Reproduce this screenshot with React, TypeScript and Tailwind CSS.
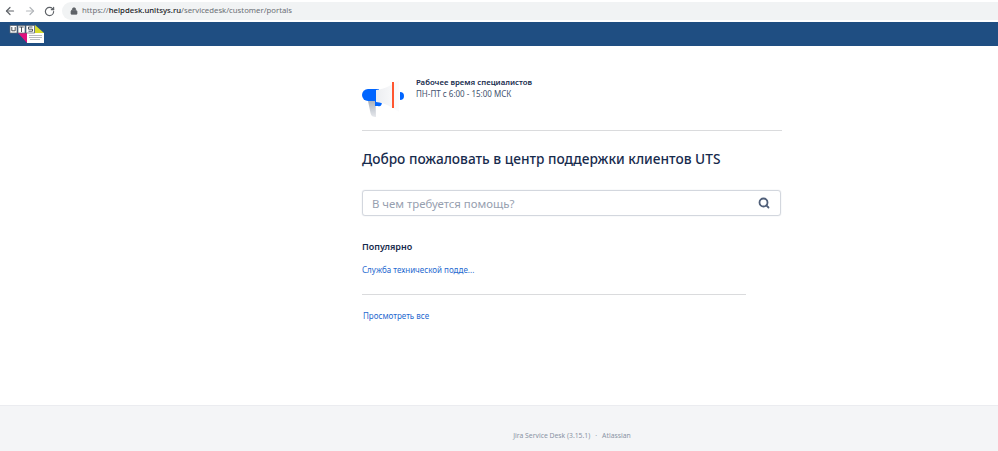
import { ArrowLeft, ArrowRight, RotateCw, Lock, Search } from "lucide-react";

function UtsLogo() {
  return (
    <svg width="36" height="24" viewBox="0 0 36 24" className="block">
      <polygon points="9,11 18,11 18,21" fill="#e0107e" />
      <polygon points="18,11 35,11 35,21 18,21" fill="#ffffff" />
      <polygon points="26,3 35,11 26,11" fill="#d8dc2c" />
      <rect x="1" y="3.500" width="7" height="7.500" fill="#fff" stroke="#5a6470" strokeWidth="0.7" />
      <rect x="9" y="3.500" width="7" height="7.500" fill="#fff" stroke="#5a6470" strokeWidth="0.7" />
      <rect x="17" y="3.500" width="8.500" height="7.500" fill="#fff" stroke="#5a6470" strokeWidth="0.7" />
      <path d="M2.800 5v3.800h3.400V5M10.300 5h4.400M12.500 5v5M23.500 5h-4v2.200h4v2h-4" fill="none" stroke="#3a3f46" strokeWidth="0.9" />
      <path d="M20 13.500h13M20 15.500h13M21 17.500h10" stroke="#a5a8ad" strokeWidth="0.8" />
    </svg>
  );
}

function Megaphone() {
  return (
    <svg width="44" height="44" viewBox="0 0 44 44" className="block">
      <defs>
        <linearGradient id="cone" x1="0" y1="0" x2="1" y2="0">
          <stop offset="0" stopColor="#eceef1" />
          <stop offset="1" stopColor="#fcfcfd" />
        </linearGradient>
        <linearGradient id="handle" x1="0" y1="0" x2="0" y2="1">
          <stop offset="0" stopColor="#aab2bd" />
          <stop offset="1" stopColor="#e6e8ec" />
        </linearGradient>
      </defs>
      <path d="M38 16a4 4 0 0 1 0 8z" fill="#0065ff" />
      <path d="M6 13h11v12H6a6 6 0 0 1 0-12z" fill="#0065ff" />
      <path d="M6 25h7.500L14 41c-3 0-5-1-5.500-4z" fill="url(#handle)" />
      <path d="M13 25h6a3 3 0 0 1-3 5h-3z" fill="#0065ff" />
      <path d="M14 14c9-1 16-5 23-10v32c-7-5-14-9-23-10z" fill="url(#cone)" />
      <rect x="30" y="6" width="2" height="26" fill="#ff5630" />
    </svg>
  );
}

export default function App() {
  return (
    <div className="h-[451px] w-[998px] flex flex-col bg-white font-['Noto_Sans','Open_Sans',sans-serif] overflow-hidden">
      <div className="h-[22px] shrink-0 flex items-center bg-white pl-[4px]">
        <ArrowLeft className="h-[12px] w-[12px] text-[#5f6368]" strokeWidth={2.4} />
        <ArrowRight className="ml-[8px] h-[12px] w-[12px] text-[#b4b7bb]" strokeWidth={2.4} />
        <RotateCw className="ml-[8px] h-[11px] w-[11px] text-[#5f6368]" strokeWidth={2.6} />
        <div className="ml-[7px] flex-1 h-[18px] rounded-l-full bg-[#f1f3f4] flex items-center pl-[8px] text-[7.750px] text-[#6b6f74]">
          <Lock className="h-[8px] w-[8px] text-[#5f6368]" fill="#5f6368" />
          <span className="ml-[4px]">https://<span className="font-medium text-[#202124]">helpdesk.unitsys.ru</span>/servicedesk/customer/portals</span>
        </div>
      </div>

      <header className="h-[24px] shrink-0 bg-[#1f4e82] pl-[9px]">
        <UtsLogo />
      </header>

      <main className="flex-1 pl-[362px]">
        <div className="w-[420px]">
          <div className="h-[85px] border-b border-[#dadbdd] flex items-start pt-[30px]">
            <Megaphone />
            <div className="ml-[10px] mt-[1px] text-[8px] leading-[11px] text-[#172b4d]">
              <div className="font-semibold text-[7.800px]">Рабочее время специалистов</div>
              <div className="text-[#42526e]">ПН-ПТ с 6:00 - 15:00 МСК</div>
            </div>
          </div>

          <h1 className="mt-[18px] text-[13.700px] leading-[20px] font-medium text-[#172b4d]">
            Добро пожаловать в центр поддержки клиентов UTS
          </h1>

          <div className="mt-[21px] h-[26px] w-[419px] rounded-[3px] border border-[#d3d7de] shadow-[0_0_1px_#c1c7d0] flex items-center pl-[9px] pr-[10px] text-[11.400px] text-[#97a0af]">
            <span className="flex-1 translate-y-[1px]">В чем требуется помощь?</span>
            <Search className="h-[12px] w-[12px] text-[#505f79]" strokeWidth={3.6} />
          </div>

          <h2 className="mt-[24px] text-[9px] leading-[14px] font-semibold text-[#172b4d]">Популярно</h2>

          <a className="block mt-[10px] text-[8px] leading-[12px] text-[#2568cf]">Служба технической подде...</a>

          <div className="mt-[18px] w-[384px] border-t border-[#dadbdd]" />

          <a className="block mt-[15px] ml-[1px] text-[8px] leading-[12px] text-[#2568cf]">Просмотреть все</a>
        </div>
      </main>

      <footer className="h-[46px] shrink-0 bg-[#f4f5f7] border-t border-[#ebecf0] flex items-start justify-center pl-[146px] pt-[25px] text-[6.800px] leading-[10px] text-[#8993a4]">
        <span>Jira Service Desk (3.15.1)</span>
        <span className="mx-[5px]">·</span>
        <span>Atlassian</span>
      </footer>
    </div>
  );
}
